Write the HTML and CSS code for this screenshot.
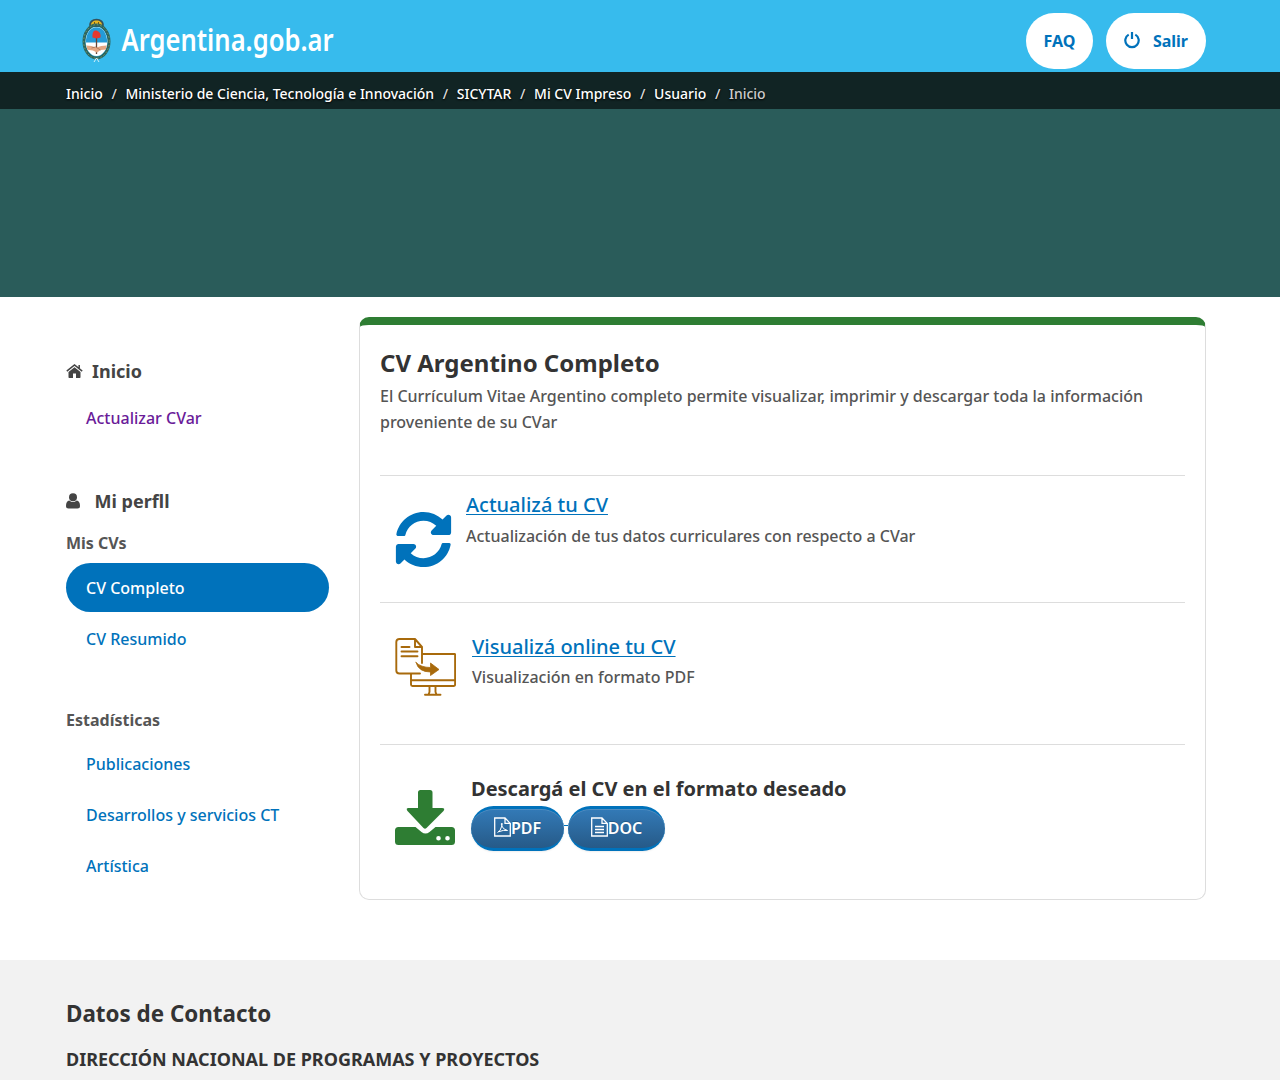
FILE: index.html
```html
<!DOCTYPE html>
<html lang="es">
<head>
<meta charset="utf-8">
<title>CV Argentino Completo</title>
<link rel="stylesheet" href="styles.css">
</head>
<body>
<header class="topbar">
  <div class="container topbar-inner">
    <a class="brand" aria-label="Argentina.gob.ar">
      <svg width="29" height="50" viewBox="0 0 29 50">
        <g transform="translate(-.5 0)">
          <path d="M8 12C5 1 25 1 22 12Z" fill="#35515a"/>
          <path d="M9.500 11C8 3.500 22 3.500 20.500 11Z" fill="#e6b421"/>
          <path d="M13 7v3M17 7v3" stroke="#6b5a20"/>
          <ellipse cx="15" cy="26.500" rx="12.500" ry="16.500" fill="none" stroke="#2b6560" stroke-width="3"/>
          <ellipse cx="15" cy="26.500" rx="12.800" ry="16.800" fill="none" stroke="#7d9c67" stroke-width="1" stroke-dasharray="1.5 2"/>
          <ellipse cx="15" cy="26.500" rx="10.800" ry="14.500" fill="#fff"/>
          <path d="M4.400 27.500C4 7 26 7 25.600 27.500Z" fill="#249bd7"/>
          <path d="M15 20v19" stroke="#634437" stroke-width="1.300"/>
          <path d="M11 22.500C10.500 15.500 13.500 15 16 16s3.500 3.500 3 6.500l-4 1Z" fill="#e5382d"/>
          <path d="M4.800 30.500l5 .5 5 1.500 5-1.500 5.400-.5-.8 4-5 .5-4 2.500-4-2-5.500-.8Z" fill="#e4a783"/>
          <path d="M10 33l4-1 5 3" fill="none" stroke="#9c6c51" stroke-width=".7"/>
          <path d="M12.500 47l2.500-4 2.500 4" fill="none" stroke="#d5f1fb"/>
        </g>
      </svg>
      <svg class="brand-name" width="260" height="50" viewBox="0 0 260 50">
        <text class="brand-text" x="3.500" y="36" textLength="212" lengthAdjust="spacingAndGlyphs">Argentina.gob.ar</text>
      </svg>
    </a>
    <nav class="actions">
      <a class="pill">FAQ</a>
      <a class="pill"><svg class="power" width="16" height="18" viewBox="0 0 16 18"><path d="M4.700 3.600A6.700 6.700 0 1 0 11.300 3.600M8 1v7" fill="none" stroke="currentColor" stroke-width="2.200"/></svg>Salir</a>
    </nav>
  </div>
</header>
<div class="crumbs">
  <ol class="container crumb-list">
    <li>Inicio</li><li>Ministerio de Ciencia, Tecnología e Innovación</li><li>SICYTAR</li><li>Mi CV Impreso</li><li>Usuario</li><li class="current">Inicio</li>
  </ol>
</div>
<div class="hero"></div>
<main class="container main">
  <aside class="sidebar">
    <h3 class="side-title"><svg class="home" width="17" height="14" viewBox="0 0 17 14"><path d="M8.500 3.200 14.500 8v5.300q0 .7-.7.700H10V9.500H7V14H3.200q-.7 0-.7-.7V8Z"/><path d="M.8 7.200 8.500 1l7.700 6.200M13.200 1v3.500" fill="none" stroke="currentColor" stroke-width="1.500"/></svg>Inicio</h3>
    <a class="side-link visited">Actualizar CVar</a>
    <h3 class="side-title profile"><svg class="user" width="14" height="16" viewBox="0 0 14 16"><circle cx="7" cy="4.300" r="4"/><path d="M3.300 7.500Q0 8 0 13q0 2.500 2.500 2.500h9q2.500 0 2.500-2.500 0-5-3.300-5.500Q7 10.500 3.300 7.500Z"/></svg>Mi perfll</h3>
    <h4 class="side-sub">Mis CVs</h4>
    <nav class="side-nav">
      <a class="side-link active">CV Completo</a>
      <a class="side-link">CV Resumido</a>
    </nav>
    <h4 class="side-sub stats">Estadísticas</h4>
    <nav class="side-nav stats-nav">
      <a class="side-link">Publicaciones</a>
      <a class="side-link">Desarrollos y servicios CT</a>
      <a class="side-link">Artística</a>
    </nav>
  </aside>
  <section class="card">
    <h1 class="card-title">CV Argentino Completo</h1>
    <p class="card-intro">El Currículum Vitae Argentino completo permite visualizar, imprimir y descargar toda la información proveniente de su CVar</p>
    <article class="row row-update">
      <svg class="icon-update" width="57" height="57" viewBox="0 0 512 512" fill="#0072bb"><path d="M370.720 133.280C339.458 104.008 298.888 87.962 255.848 88c-77.458.068-144.328 53.178-162.791 126.850-1.344 5.363-6.122 9.150-11.651 9.150H24.103c-7.498 0-13.194-6.807-11.807-14.176C33.933 94.924 134.813 8 256 8c66.448 0 126.791 26.136 171.315 68.685L463.030 40.970C478.149 25.851 504 36.559 504 57.941V192c0 13.255-10.745 24-24 24H345.941c-21.382 0-32.090-25.851-16.971-40.971l41.750-41.749zM32 296h134.059c21.382 0 32.090 25.851 16.971 40.971l-41.750 41.750c31.262 29.273 71.835 45.319 114.876 45.280 77.418-.070 144.315-53.144 162.787-126.849 1.344-5.363 6.122-9.150 11.651-9.150h57.304c7.498 0 13.194 6.807 11.807 14.176C478.067 417.076 377.187 504 256 504c-66.448 0-126.791-26.136-171.315-68.685L48.970 471.030C33.851 486.149 8 475.441 8 454.059V320c0-13.255 10.745-24 24-24z"/></svg>
      <div>
        <h2 class="row-title"><a class="link">Actualizá tu CV</a></h2>
        <p class="row-text update-text">Actualización de tus datos curriculares con respecto a CVar</p>
      </div>
    </article>
    <article class="row row-view">
      <svg class="icon-view" width="61" height="60" viewBox="0 0 61 60" fill="none" stroke="#a86a0c" stroke-width="1.900" stroke-linejoin="round" stroke-linecap="round">
        <path d="M27 26V10L20 2H4.500Q1.300 2 1.300 5v28.500q0 3 3.200 3h20.500M20 2v8h7M6.500 10h8M6.500 14.500h16M6.500 19.200h16M27.500 17h32q.6 0 .6.600V47.500q0 1.500-1.500 1.500H17.500Q16 49 16 47.500V37M16 43.300h44M34.500 49.500v5.500l-1 2.500M40.500 49.500v5.500l1 2.500M30 57.800h15.500"/>
        <path d="M21 25.500q5 5 14.500 5V26l8.500 6.500-8.500 6V35Q23.500 35 21 25.500Z" fill="#a86a0c" stroke-width=".8"/>
      </svg>
      <div>
        <h2 class="row-title"><a class="link">Visualizá online tu CV</a></h2>
        <p class="row-text">Visualización en formato PDF</p>
      </div>
    </article>
    <article class="row row-download">
      <svg class="icon-download" width="60" height="56" viewBox="0 0 60 56" fill="#2e7d33"><path d="M25.500 0h9.500q2.500 0 2.500 2.500V18H47q3.500 0 1.500 3L31.500 38q-1.500 1.500-3 0L12.500 21q-2-3 1-3H23V2.500Q23 0 25.500 0Z"/><path fill-rule="evenodd" d="M3.500 37h17l6 5q4 3 8 0l6-5h16q3.500 0 3.500 3.500v11q0 3.500-3.500 3.500h-53Q0 55 0 51.500v-11Q0 37 3.500 37ZM43.500 46a2.300 2.300 0 1 0 0 4.600 2.300 2.300 0 0 0 0-4.600ZM52.500 46a2.300 2.300 0 1 0 0 4.600 2.300 2.300 0 0 0 0-4.600Z"/></svg>
      <div>
        <h2 class="row-title">Descargá el CV en el formato deseado</h2>
        <div class="buttons">
          <a class="btn pdf"><svg width="17" height="20" viewBox="0 0 17 20" fill="none" stroke="#fff" stroke-width="1.300"><path d="M.7 1h10.300l5.300 5.400V19H.7ZM11 1v5.400h5.300"/><path d="M3.500 15.500q3-1 4.500-7 .3-2 0-2.500-1 0-.5 2.500 1.500 4 6 5-4-.8-9 1.300" stroke-width="1"/></svg>PDF</a><span class="joint"></span><a class="btn doc"><svg width="17" height="20" viewBox="0 0 17 20" fill="none" stroke="#fff" stroke-width="1.300"><path d="M.7 1h10.300l5.300 5.400V19H.7ZM11 1v5.400h5.300M4 9.500h9M4 12.500h9M4 15.500h9"/></svg>DOC</a>
        </div>
      </div>
    </article>
  </section>
</main>
<footer class="footer">
  <div class="container">
    <h2 class="foot-title">Datos de Contacto</h2>
    <h3 class="foot-sub">DIRECCIÓN NACIONAL DE PROGRAMAS Y PROYECTOS</h3>
  </div>
</footer>
</body>
</html>
```
FILE: styles.css
```css
* { box-sizing: border-box; }
html { overflow: hidden; }
body { margin: 0; height: 1080px; overflow: hidden; background: #fff; color: #555; font: 500 16px/26px "Noto Sans", sans-serif; }
h1, h2, h3, h4, p, ol { margin: 0; padding: 0; }
svg { display: block; flex: none; }
.container { width: 1140px; margin-left: 66px; }

.topbar { height: 72px; background: #37bbed; }
.topbar-inner { display: flex; justify-content: space-between; }
.brand { display: flex; gap: 7px; padding: 15px 0 0 16px; }
.brand-name { overflow: visible; }
.brand-text { font: 600 30px "Noto Sans", sans-serif; fill: #fff; }
.actions { display: flex; gap: 13px; padding-top: 13px; }
.pill { display: flex; align-items: center; height: 56px; padding: 0 18px; border-radius: 28px; background: #fff; color: #0072bb; font-weight: 700; }
.power { margin: -3px 12.5px 0 0; }

.crumbs { height: 37px; background: #112424; }
.crumb-list { display: flex; padding-top: 10px; list-style: none; color: #fff; font-size: 14px; font-weight: 500; line-height: 24px; text-shadow: 0 1px 2px #000; }
.crumb-list li + li::before { content: "/"; padding: 0 8.65px; color: #ddd; }
.crumb-list .current { color: #ccc; }
.hero { height: 188px; background: #2a5c5a; }

.main { display: flex; gap: 30px; height: 663px; padding-top: 20px; }
.sidebar { width: 263px; padding-top: 41px; }
.side-title { display: flex; align-items: center; color: #444; font-size: 18px; font-weight: 700; line-height: 26px; }
.side-title svg { fill: currentColor; }
.home { margin-right: 9px; }
.user { margin-right: 14.5px; }
.profile { margin-top: 46px; }
.side-link { display: block; height: 49px; padding-left: 20px; border-radius: 25px; color: #0072bb; line-height: 51px; }
.visited { margin-top: 9px; color: #6a1b99; }
.side-sub { margin-top: 16px; font-size: 16px; font-weight: 700; line-height: 26px; }
.side-nav { display: grid; gap: 2px; margin-top: 7px; }
.active { background: #0072bb; color: #fff; }
.stats { margin-top: 44px; }
.stats-nav { margin-top: 6px; }

.card { width: 847px; height: 583px; padding: 22px 20px 0; border: 1px solid #ddd; border-top: 8px solid #2e7d33; border-radius: 10px; }
.card-title { color: #333; font-size: 24px; font-weight: 700; line-height: 32px; }
.card-intro { margin: 4px 0 40px; }
.row { display: flex; gap: 16px; padding-left: 15px; border-top: 1px solid #ddd; }
.row-update { height: 127px; padding-top: 16px; gap: 14px; }
.row-view { height: 142px; padding-top: 31px; }
.row-download { padding-top: 31px; }
.row-title { color: #333; font-size: 20px; font-weight: 700; line-height: 26px; }
.row-text { margin-top: 4px; }
.update-text { margin-top: 5px; }
.link { color: #0072bb; font-weight: 500; text-decoration: underline; text-decoration-thickness: 1px; text-underline-offset: 2px; }
.icon-update { margin-top: 19px; }
.icon-view { margin-top: 3px; }
.icon-download { margin-top: 14px; }
.buttons { display: flex; align-items: center; margin-top: 4px; }
.btn { display: flex; align-items: center; justify-content: center; height: 45px; padding-bottom: 1px; border: 3px solid #0072bb; border-width: 3px 0; border-radius: 23px; background: linear-gradient(#337ab7, #265a88); box-shadow: inset 0 1px 0 rgba(255,255,255,.15), 0 1px 2px rgba(0,0,0,.07); color: #fff; font-weight: 600; text-shadow: 0 -1px 0 rgba(0,0,0,.2); }
.pdf { width: 93px; }
.doc { width: 97px; }
.btn svg { margin-top: -2px; }
.joint { width: 4px; height: 1px; margin-top: -6px; background: #0072bb; }

.footer { height: 120px; padding-top: 38px; background: #f2f2f2; color: #333; }
.foot-title { font-size: 22.4px; font-weight: 700; line-height: 31px; }
.foot-sub { margin-top: 17px; font-size: 18px; font-weight: 700; line-height: 26px; }
```
